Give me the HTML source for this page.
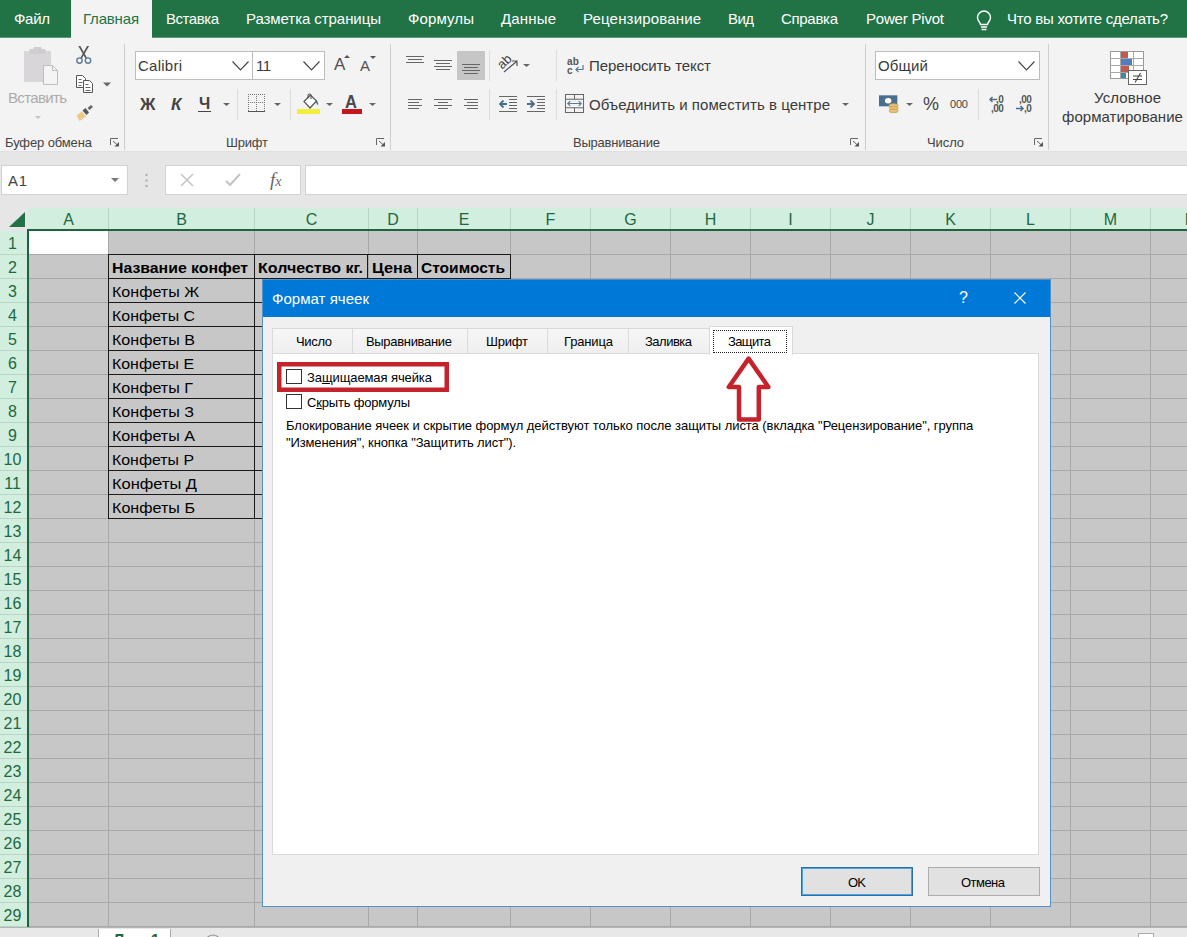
<!DOCTYPE html>
<html lang="ru"><head><meta charset="utf-8"><title>Формат ячеек</title>
<style>
*{box-sizing:border-box;margin:0;padding:0}
html,body{width:1187px;height:937px;overflow:hidden;background:#e6e6e6}
body{font-family:"Liberation Sans",sans-serif;position:relative;color:#262626}
.abs,.t{position:absolute;white-space:nowrap}
.t{line-height:1}
#tabs{position:absolute;left:0;top:0;width:1187px;height:38px;background:#217346;border-bottom:1px solid #5d9a7b}
#tabs .t{color:#fff;font-size:15px;top:11px}
#tabs .act{position:absolute;left:71px;top:0;width:81px;height:38px;background:#f3f3f3}
#ribbon{position:absolute;left:0;top:38px;width:1187px;height:114px;background:#f3f3f3;border-bottom:1px solid #e0e0e0}
.sep{position:absolute;width:1px;background:#dcdcdc}
.gl{position:absolute;font-size:13px;line-height:1;color:#444;white-space:nowrap;top:136px}
.rt{position:absolute;font-size:15px;line-height:1;color:#3a3a3a;white-space:nowrap}
.box{position:absolute;background:#fff;border:1px solid #bcbcbc}
svg{position:absolute;overflow:visible}
#grid{position:absolute;left:0;top:207px;width:1187px;height:721px;background:#c7c7c7;overflow:hidden}
.ch{position:absolute;top:0;height:23px;font-size:16px;color:#1e6840;text-align:center;line-height:25px}
.rh{position:absolute;left:0;width:25px;height:24px;font-size:16px;color:#1e6840;text-align:center;line-height:25px}
.vl{position:absolute;width:1px;background:#a8a8a8}
.hl{position:absolute;height:1px;background:#a8a8a8}
.c{position:absolute;font-size:15px;line-height:1;color:#000;white-space:nowrap;transform-origin:0 0}
.bk{position:absolute;background:#1a1a1a}
#dlg{position:absolute;left:262px;top:279px;width:789px;height:628px;background:#f0f0f0;border:1px solid #5590c8;}
#dlg .title{position:absolute;left:0;top:0;width:787px;height:37px;background:#0078d7}
.d{position:absolute;font-size:13px;line-height:1;color:#000;white-space:nowrap}
.tab{position:absolute;height:25px;border:1px solid #dadada;border-bottom:none;background:linear-gradient(#f6f6f6,#efefef)}
.cb{position:absolute;width:16px;height:15px;border:1px solid #333;background:#fff}
.btn{position:absolute;top:585px;height:31px;background:#e1e1e1}
</style></head><body>

<div id="tabs"><div class="act"></div>
<span class="t" style="letter-spacing:-0.30px;left:14px">Файл</span>
<span class="t" style="letter-spacing:-0.18px;left:83px;color:#217346">Главная</span>
<span class="t" style="letter-spacing:-0.46px;left:166px">Вставка</span>
<span class="t" style="letter-spacing:-0.07px;left:246px">Разметка страницы</span>
<span class="t" style="letter-spacing:0.12px;left:408px">Формулы</span>
<span class="t" style="letter-spacing:0.16px;left:501px">Данные</span>
<span class="t" style="letter-spacing:0.17px;left:583px">Рецензирование</span>
<span class="t" style="letter-spacing:-0.57px;left:728px">Вид</span>
<span class="t" style="letter-spacing:-0.31px;left:781px">Справка</span>
<span class="t" style="letter-spacing:-0.20px;left:866px">Power Pivot</span>
<span class="t" style="letter-spacing:-0.23px;left:1007px">Что вы хотите сделать?</span>
<svg style="left:974px;top:8px" width="20" height="24" viewBox="0 0 20 24" fill="none" stroke="#fff" stroke-width="1.4"><path d="M6.5 16.5c0-2-3-3.500-3-7a6.500 6.500 0 0 1 13 0c0 3.500-3 5-3 7z"/><path d="M7 19h6M7.500 21.500h5"/></svg>
</div>
<div id="ribbon"></div>
<div class="sep" style="left:124px;top:44px;height:106px;background:#cecece"></div>
<div class="sep" style="left:390px;top:44px;height:106px;background:#cecece"></div>
<div class="sep" style="left:865px;top:44px;height:106px;background:#cecece"></div>
<div class="sep" style="left:1048px;top:44px;height:106px;background:#cecece"></div>
<div class="sep" style="left:489px;top:50px;height:31px"></div>
<div class="sep" style="left:489px;top:89px;height:31px"></div>
<div class="sep" style="left:556px;top:50px;height:31px"></div>
<div class="sep" style="left:556px;top:89px;height:31px"></div>
<div class="sep" style="left:237px;top:89px;height:31px"></div>
<div class="sep" style="left:290px;top:89px;height:31px"></div>
<div class="sep" style="left:978px;top:89px;height:31px"></div>
<span class="gl" style="letter-spacing:-0.12px;left:5px">Буфер обмена</span>
<span class="gl" style="letter-spacing:-0.20px;left:226px">Шрифт</span>
<span class="gl" style="letter-spacing:-0.23px;left:573px">Выравнивание</span>
<span class="gl" style="letter-spacing:-0.10px;left:927px">Число</span>
<svg style="left:110px;top:138px" width="10" height="9" viewBox="0 0 10 9" fill="none" stroke="#666" stroke-width="1"><path d="M0.500 7V0.500H8"/><path d="M3 3l5 4.500"/><path d="M9 4v4.500H4.500z" fill="#555" stroke="none"/></svg>
<svg style="left:376px;top:138px" width="10" height="9" viewBox="0 0 10 9" fill="none" stroke="#666" stroke-width="1"><path d="M0.500 7V0.500H8"/><path d="M3 3l5 4.500"/><path d="M9 4v4.500H4.500z" fill="#555" stroke="none"/></svg>
<svg style="left:850px;top:138px" width="10" height="9" viewBox="0 0 10 9" fill="none" stroke="#666" stroke-width="1"><path d="M0.500 7V0.500H8"/><path d="M3 3l5 4.500"/><path d="M9 4v4.500H4.500z" fill="#555" stroke="none"/></svg>
<svg style="left:1034px;top:138px" width="10" height="9" viewBox="0 0 10 9" fill="none" stroke="#666" stroke-width="1"><path d="M0.500 7V0.500H8"/><path d="M3 3l5 4.500"/><path d="M9 4v4.500H4.500z" fill="#555" stroke="none"/></svg>
<svg style="left:24px;top:46px" width="36" height="40" viewBox="0 0 36 40"><rect x="0" y="5" width="27" height="31" fill="#d8d6d8"/><rect x="5.500" y="3" width="16" height="5" fill="#cfcdcf"/><rect x="9.500" y="1" width="8" height="4" rx="1" fill="#cfcdcf"/><path d="M19.500 19.500h9l5 5v14h-14z" fill="#f4f4f4" stroke="#bdbdbd"/><path d="M28.500 19.500v5h5" fill="none" stroke="#bdbdbd"/></svg>
<span class="rt" style="letter-spacing:-0.66px;left:8px;top:90px;color:#ababab">Вставить</span>
<svg style="left:35px;top:116px" width="6" height="3" viewBox="0 0 6 3"><path d="M0 0h6L3 3z" fill="#c4c4c4"/></svg>
<svg style="left:70px;top:40px" width="50" height="90" viewBox="70 40 50 90" fill="none"><path d="M78.300 46h2l6.800 12-1.400 0.800z" fill="#555"/><path d="M89.100 46h-2l-6.800 12 1.400 0.800z" fill="#555"/><circle cx="79.500" cy="60.600" r="2.700" stroke="#5a7a96" stroke-width="1.400"/><circle cx="88" cy="60.600" r="2.700" stroke="#5a7a96" stroke-width="1.400"/><path d="M76.500 75.500h6l3 3v9h-9z" fill="#fff" stroke="#555"/><path d="M78.500 79.500h3M78.500 82.500h4M78.500 85.500h3" stroke="#666"/><path d="M83.500 80.500h6l3 3v9h-9z" fill="#fff" stroke="#555"/><path d="M85.500 84.500h3M85.500 87.500h5M85.500 90.500h5" stroke="#666"/><path d="M103 82.500h8l-4 4z" fill="#666"/><path d="M76.500 115.500l5.500-4 4 5-6.500 4.500z" fill="#ecc889"/><path d="M82.500 110.500l3-2.500 3.500 4.500-2.500 2.500z" fill="#555"/><path d="M87.500 108l3.500-3 2 2-3.500 3z" fill="#666"/></svg>
<div class="box" style="left:135px;top:51px;width:118px;height:29px"></div>
<div class="box" style="left:252px;top:51px;width:73px;height:29px"></div>
<span class="rt" style="letter-spacing:0.25px;left:138px;top:58px">Calibri</span>
<span class="rt" style="letter-spacing:-0.58px;left:256px;top:58px">11</span>
<span class="rt" style="left:334px;top:56px;font-size:17px;color:#505050">A</span>
<svg style="left:344px;top:55px" width="6" height="3" viewBox="0 0 6 3"><path d="M0 3L3 0l3 3z" fill="#555"/></svg>
<span class="rt" style="left:360px;top:58px;font-size:15px;color:#505050">A</span>
<svg style="left:370px;top:56px" width="6" height="3" viewBox="0 0 6 3"><path d="M0 0L3 3l3-3z" fill="#555"/></svg>
<span class="rt" style="left:140px;top:96px;font-size:17px;font-weight:bold;color:#444">Ж</span>
<span class="rt" style="left:171px;top:96px;font-size:17px;font-weight:bold;font-style:italic;color:#444">К</span>
<span class="rt" style="left:199px;top:96px;font-size:16px;font-weight:bold;color:#444">Ч</span>
<div class="abs" style="left:198px;top:111px;width:13px;height:1px;background:#444"></div>
<svg style="left:223px;top:103px" width="7" height="3" viewBox="0 0 7 3"><path d="M0 0h7L3.500 3z" fill="#666"/></svg>
<svg style="left:274px;top:103px" width="7" height="3" viewBox="0 0 7 3"><path d="M0 0h7L3.500 3z" fill="#666"/></svg>
<svg style="left:326px;top:103px" width="7" height="3" viewBox="0 0 7 3"><path d="M0 0h7L3.500 3z" fill="#666"/></svg>
<svg style="left:369px;top:103px" width="7" height="3" viewBox="0 0 7 3"><path d="M0 0h7L3.500 3z" fill="#666"/></svg>
<svg style="left:842px;top:103px" width="7" height="3" viewBox="0 0 7 3"><path d="M0 0h7L3.500 3z" fill="#666"/></svg>
<svg style="left:906px;top:103px" width="7" height="3" viewBox="0 0 7 3"><path d="M0 0h7L3.500 3z" fill="#666"/></svg>
<svg style="left:248px;top:94px" width="17" height="18" viewBox="0 0 17 18" fill="none" stroke="#777" stroke-width="1"><path d="M0 0.500h17M0 8.500h17M0.500 0v17M8.500 0v17M16.500 0v17" stroke-dasharray="1 1"/><path d="M0 17.500h17" stroke="#555"/></svg>
<svg style="left:295px;top:90px" width="30" height="30" viewBox="295 90 30 30"><rect x="297" y="109" width="23" height="5" fill="#f3ee3a"/><path d="M304 101.500l6.500-6.500 6 6-6.500 7z" fill="#fff" stroke="#555" stroke-width="1.200"/><path d="M308 98.500V95.500a1.500 1.500 0 0 1 3 0V99" fill="none" stroke="#555" stroke-width="1.100"/><path d="M316 99.500c1.500 1.500 2.500 3.500 2 6l-2.500-3.500z" fill="#4a6f8e"/></svg>
<span class="rt" style="left:345px;top:93px;font-size:18px;font-weight:bold;color:#4a4a4a;transform:scaleX(0.92);transform-origin:0 0">A</span>
<div class="abs" style="left:342px;top:109px;width:20px;height:5px;background:#c4161c"></div>
<div class="abs" style="left:457px;top:51px;width:28px;height:29px;background:#c6c6c6"></div>
<svg style="left:406px;top:56px" width="18" height="20" viewBox="0 0 18 20" stroke="#666" stroke-width="1"><path d="M0 0.5h18"/><path d="M2 3.5h14"/><path d="M0 6.5h18"/></svg>
<svg style="left:434px;top:60px" width="18" height="20" viewBox="0 0 18 20" stroke="#666" stroke-width="1"><path d="M0 0.5h18"/><path d="M2 3.5h14"/><path d="M0 6.5h18"/><path d="M2 9.5h14"/></svg>
<svg style="left:462px;top:64px" width="18" height="20" viewBox="0 0 18 20" stroke="#666" stroke-width="1"><path d="M0 0.5h18"/><path d="M2 3.5h14"/><path d="M0 6.5h18"/><path d="M2 9.5h14"/></svg>
<svg style="left:408px;top:99px" width="14" height="20" viewBox="0 0 14 20" stroke="#666" stroke-width="1"><path d="M0 0.5h14"/><path d="M0 3.5h11"/><path d="M0 6.5h14"/><path d="M0 9.5h11"/></svg>
<svg style="left:434px;top:99px" width="18" height="20" viewBox="0 0 18 20" stroke="#666" stroke-width="1"><path d="M0 0.5h18"/><path d="M4 3.5h10"/><path d="M0 6.5h18"/><path d="M4 9.5h10"/></svg>
<svg style="left:464px;top:99px" width="14" height="20" viewBox="0 0 14 20" stroke="#666" stroke-width="1"><path d="M0 0.5h14"/><path d="M3 3.5h11"/><path d="M0 6.5h14"/><path d="M3 9.5h11"/></svg>
<span class="rt" style="left:497px;top:55px;font-size:13px;color:#444;transform:rotate(-45deg);transform-origin:50% 50%">ab</span>
<svg style="left:503px;top:60px" width="15" height="13" viewBox="0 0 15 13" fill="none" stroke="#555" stroke-width="1.200"><path d="M1 12L13.500 1.500M9 1h5v5"/></svg>
<svg style="left:523px;top:64px" width="7" height="3" viewBox="0 0 7 3"><path d="M0 0h7L3.500 3z" fill="#666"/></svg>
<svg style="left:499px;top:96px" width="18" height="16" viewBox="0 0 18 16" stroke="#666" stroke-width="1" fill="none"><path d="M0 0.500h18M10 3.500h8M10 6.500h8M10 9.500h8M10 12.500h8M0 15.500h18"/><path d="M8 8H1.500M4.500 4.500L1 8l3.500 3.500" stroke="#4a6f8e" stroke-width="1.800"/></svg>
<svg style="left:527px;top:96px" width="18" height="16" viewBox="0 0 18 16" stroke="#666" stroke-width="1" fill="none"><path d="M0 0.500h18M10 3.500h8M10 6.500h8M10 9.500h8M10 12.500h8M0 15.500h18"/><path d="M0 8h6.500M3.500 4.500L7 8l-3.500 3.500" stroke="#4a6f8e" stroke-width="1.800"/></svg>
<span class="rt" style="left:567px;top:57px;font-size:10px;font-weight:bold;color:#555;line-height:9px;letter-spacing:0.3px">ab<br>c</span>
<svg style="left:575px;top:65px" width="9" height="8" viewBox="0 0 9 8" fill="none" stroke="#5a7a96" stroke-width="1.200"><path d="M8 0v4.500H1M3.500 2L1 4.500 3.500 7"/></svg>
<span class="rt" style="letter-spacing:-0.09px;left:589px;top:58px">Переносить текст</span>
<svg style="left:565px;top:94px" width="19" height="19" viewBox="0 0 20 20" fill="none" stroke="#666" stroke-width="1.050"><rect x="0.500" y="0.500" width="19" height="19"/><path d="M0.500 5.500h19M0.500 14.500h19M10 0.500v5M10 14.500v5"/><path d="M3 10h14M5.500 7.500L3 10l2.500 2.500M14.500 7.500L17 10l-2.500 2.500" stroke="#5a7a96" stroke-width="1.300"/></svg>
<span class="rt" style="letter-spacing:0.04px;left:589px;top:97px">Объединить и поместить в центре</span>
<div class="box" style="left:875px;top:51px;width:165px;height:29px"></div>
<span class="rt" style="letter-spacing:0.16px;left:878px;top:58px">Общий</span>
<svg style="left:232px;top:61px" width="17" height="10" viewBox="0 0 17 10" fill="none" stroke="#444" stroke-width="1.100"><path d="M0.500 0.500l8 8.500 8-8.500"/></svg>
<svg style="left:303px;top:61px" width="17" height="10" viewBox="0 0 17 10" fill="none" stroke="#444" stroke-width="1.100"><path d="M0.500 0.500l8 8.500 8-8.500"/></svg>
<svg style="left:1018px;top:61px" width="17" height="10" viewBox="0 0 17 10" fill="none" stroke="#444" stroke-width="1.100"><path d="M0.500 0.500l8 8.500 8-8.500"/></svg>
<svg style="left:879px;top:95px" width="22" height="19" viewBox="0 0 24 20"><rect x="0" y="0" width="20" height="12" fill="#4a6f8e"/><ellipse cx="10" cy="6" rx="3.500" ry="3" fill="#fff"/><ellipse cx="16" cy="11" rx="5" ry="2" fill="#e8c178" stroke="#b8903c" stroke-width="0.600"/><ellipse cx="16" cy="14" rx="5" ry="2" fill="#e8c178" stroke="#b8903c" stroke-width="0.600"/><ellipse cx="16" cy="17" rx="5" ry="2" fill="#e8c178" stroke="#b8903c" stroke-width="0.600"/></svg>
<span class="rt" style="left:923px;top:95px;font-size:18px;color:#444">%</span>
<span class="rt" style="left:950px;top:99px;font-size:11px;color:#444;letter-spacing:-0.2px">000</span>
<span class="rt" style="left:996px;top:95px;font-size:10px;font-weight:bold;color:#555;line-height:9px;letter-spacing:-0.5px">,0</span>
<span class="rt" style="left:991px;top:104px;font-size:10px;font-weight:bold;color:#555;line-height:9px;letter-spacing:-0.5px">,00</span>
<svg style="left:989px;top:96px" width="8" height="7" viewBox="0 0 8 7" fill="none" stroke="#4a6f8e" stroke-width="1.500"><path d="M8 3.500H1M3.500 1L1 3.500 3.500 6"/></svg>
<span class="rt" style="left:1019px;top:95px;font-size:10px;font-weight:bold;color:#555;line-height:9px;letter-spacing:-0.5px">,00</span>
<span class="rt" style="left:1024px;top:104px;font-size:10px;font-weight:bold;color:#555;line-height:9px;letter-spacing:-0.5px">,0</span>
<svg style="left:1016px;top:105px" width="8" height="7" viewBox="0 0 8 7" fill="none" stroke="#4a6f8e" stroke-width="1.500"><path d="M0 3.500h7M4.500 1L7 3.500 4.500 6"/></svg>
<svg style="left:1105px;top:45px" width="50" height="45" viewBox="1105 45 50 45"><rect x="1110.500" y="51.500" width="33" height="27" fill="#fff" stroke="#9a9a9a"/><path d="M1110.500 58.500h33M1110.500 65.500h33M1110.500 72.500h33M1120.500 51.500v27M1133.500 51.500v27" stroke="#a8a8a8" fill="none"/><rect x="1121" y="52" width="7" height="6" fill="#c25a4e"/><rect x="1121" y="59" width="11" height="6" fill="#4f7fbf"/><rect x="1121" y="66" width="8" height="6" fill="#c25a4e"/><rect x="1121" y="73" width="5" height="5" fill="#3f8aa6"/><rect x="1128.500" y="70.500" width="18" height="14" fill="#fff" stroke="#666"/><path d="M1133 76h9M1133 79.500h9M1140.500 73l-5.500 9.500" stroke="#444" fill="none" stroke-width="1.100"/></svg>
<span class="rt" style="letter-spacing:0.11px;left:1094px;top:90px">Условное</span>
<span class="rt" style="letter-spacing:0.04px;left:1062px;top:109px">форматирование</span>
<div class="abs" style="left:1px;top:165px;width:127px;height:30px;background:#fff;border:1px solid #d2d2d2"></div>
<span class="rt" style="letter-spacing:0.64px;left:8px;top:173px;color:#444">A1</span>
<svg style="left:111px;top:178px" width="8" height="4" viewBox="0 0 8 4"><path d="M0 0h8L4 4z" fill="#777"/></svg>
<svg style="left:145px;top:173px" width="3" height="15" viewBox="0 0 3 15" fill="#b0b0b0"><circle cx="1.500" cy="2" r="1.200"/><circle cx="1.500" cy="7.500" r="1.200"/><circle cx="1.500" cy="13" r="1.200"/></svg>
<div class="abs" style="left:165px;top:165px;width:136px;height:30px;background:#fff;border:1px solid #d2d2d2"></div>
<svg style="left:180px;top:173px" width="14" height="14" viewBox="0 0 14 14" fill="none" stroke="#c4c4c4" stroke-width="1.500"><path d="M1 1l12 12M13 1L1 13"/></svg>
<svg style="left:225px;top:173px" width="16" height="14" viewBox="0 0 16 14" fill="none" stroke="#c4c4c4" stroke-width="2"><path d="M1 8l4 4L15 1"/></svg>
<span class="rt" style="left:270px;top:170px;font-family:'Liberation Serif',serif;font-style:italic;font-size:19px;color:#666">f<span style="font-size:14px">x</span></span>
<div class="abs" style="left:305px;top:165px;width:890px;height:30px;background:#fff;border:1px solid #d2d2d2"></div>
<div id="grid">
<div class="abs" style="left:0;top:1px;width:1187px;height:23px;background:#d1eedf"></div>
<div class="abs" style="left:0;top:0;width:1187px;height:1px;background:#e6e6e6"></div>
<div class="abs" style="left:0;top:0;width:28px;height:721px;background:#d1eedf"></div>
<div class="abs" style="left:0;top:0;width:28px;height:24px;background:#e6e6e6"></div>
<svg style="left:9px;top:5px" width="16" height="15" viewBox="0 0 16 15"><path d="M16 0v15H0z" fill="#217346"/></svg>
<div class="ch" style="left:29px;width:79px">A</div>
<div class="vl" style="left:108px;top:1px;height:23px;background:#b4d6c4"></div>
<div class="vl" style="left:108px;top:24px;height:697px"></div>
<div class="ch" style="left:109px;width:145px">B</div>
<div class="vl" style="left:254px;top:1px;height:23px;background:#b4d6c4"></div>
<div class="vl" style="left:254px;top:24px;height:697px"></div>
<div class="ch" style="left:255px;width:113px">C</div>
<div class="vl" style="left:368px;top:1px;height:23px;background:#b4d6c4"></div>
<div class="vl" style="left:368px;top:24px;height:697px"></div>
<div class="ch" style="left:369px;width:48px">D</div>
<div class="vl" style="left:417px;top:1px;height:23px;background:#b4d6c4"></div>
<div class="vl" style="left:417px;top:24px;height:697px"></div>
<div class="ch" style="left:418px;width:92px">E</div>
<div class="vl" style="left:510px;top:1px;height:23px;background:#b4d6c4"></div>
<div class="vl" style="left:510px;top:24px;height:697px"></div>
<div class="ch" style="left:511px;width:79px">F</div>
<div class="vl" style="left:590px;top:1px;height:23px;background:#b4d6c4"></div>
<div class="vl" style="left:590px;top:24px;height:697px"></div>
<div class="ch" style="left:591px;width:79px">G</div>
<div class="vl" style="left:670px;top:1px;height:23px;background:#b4d6c4"></div>
<div class="vl" style="left:670px;top:24px;height:697px"></div>
<div class="ch" style="left:671px;width:79px">H</div>
<div class="vl" style="left:750px;top:1px;height:23px;background:#b4d6c4"></div>
<div class="vl" style="left:750px;top:24px;height:697px"></div>
<div class="ch" style="left:751px;width:79px">I</div>
<div class="vl" style="left:830px;top:1px;height:23px;background:#b4d6c4"></div>
<div class="vl" style="left:830px;top:24px;height:697px"></div>
<div class="ch" style="left:831px;width:79px">J</div>
<div class="vl" style="left:910px;top:1px;height:23px;background:#b4d6c4"></div>
<div class="vl" style="left:910px;top:24px;height:697px"></div>
<div class="ch" style="left:911px;width:79px">K</div>
<div class="vl" style="left:990px;top:1px;height:23px;background:#b4d6c4"></div>
<div class="vl" style="left:990px;top:24px;height:697px"></div>
<div class="ch" style="left:991px;width:79px">L</div>
<div class="vl" style="left:1070px;top:1px;height:23px;background:#b4d6c4"></div>
<div class="vl" style="left:1070px;top:24px;height:697px"></div>
<div class="ch" style="left:1071px;width:79px">M</div>
<div class="vl" style="left:1150px;top:1px;height:23px;background:#b4d6c4"></div>
<div class="vl" style="left:1150px;top:24px;height:697px"></div>
<div class="ch" style="left:1151px;width:79px">N</div>
<div class="rh" style="top:24px">1</div>
<div class="hl" style="left:0;top:47px;width:27px;background:#b8d8c6"></div>
<div class="hl" style="left:28px;top:47px;width:1159px"></div>
<div class="rh" style="top:48px">2</div>
<div class="hl" style="left:0;top:71px;width:27px;background:#b8d8c6"></div>
<div class="hl" style="left:28px;top:71px;width:1159px"></div>
<div class="rh" style="top:72px">3</div>
<div class="hl" style="left:0;top:95px;width:27px;background:#b8d8c6"></div>
<div class="hl" style="left:28px;top:95px;width:1159px"></div>
<div class="rh" style="top:96px">4</div>
<div class="hl" style="left:0;top:119px;width:27px;background:#b8d8c6"></div>
<div class="hl" style="left:28px;top:119px;width:1159px"></div>
<div class="rh" style="top:120px">5</div>
<div class="hl" style="left:0;top:143px;width:27px;background:#b8d8c6"></div>
<div class="hl" style="left:28px;top:143px;width:1159px"></div>
<div class="rh" style="top:144px">6</div>
<div class="hl" style="left:0;top:167px;width:27px;background:#b8d8c6"></div>
<div class="hl" style="left:28px;top:167px;width:1159px"></div>
<div class="rh" style="top:168px">7</div>
<div class="hl" style="left:0;top:191px;width:27px;background:#b8d8c6"></div>
<div class="hl" style="left:28px;top:191px;width:1159px"></div>
<div class="rh" style="top:192px">8</div>
<div class="hl" style="left:0;top:215px;width:27px;background:#b8d8c6"></div>
<div class="hl" style="left:28px;top:215px;width:1159px"></div>
<div class="rh" style="top:216px">9</div>
<div class="hl" style="left:0;top:239px;width:27px;background:#b8d8c6"></div>
<div class="hl" style="left:28px;top:239px;width:1159px"></div>
<div class="rh" style="top:240px">10</div>
<div class="hl" style="left:0;top:263px;width:27px;background:#b8d8c6"></div>
<div class="hl" style="left:28px;top:263px;width:1159px"></div>
<div class="rh" style="top:264px">11</div>
<div class="hl" style="left:0;top:287px;width:27px;background:#b8d8c6"></div>
<div class="hl" style="left:28px;top:287px;width:1159px"></div>
<div class="rh" style="top:288px">12</div>
<div class="hl" style="left:0;top:311px;width:27px;background:#b8d8c6"></div>
<div class="hl" style="left:28px;top:311px;width:1159px"></div>
<div class="rh" style="top:312px">13</div>
<div class="hl" style="left:0;top:335px;width:27px;background:#b8d8c6"></div>
<div class="hl" style="left:28px;top:335px;width:1159px"></div>
<div class="rh" style="top:336px">14</div>
<div class="hl" style="left:0;top:359px;width:27px;background:#b8d8c6"></div>
<div class="hl" style="left:28px;top:359px;width:1159px"></div>
<div class="rh" style="top:360px">15</div>
<div class="hl" style="left:0;top:383px;width:27px;background:#b8d8c6"></div>
<div class="hl" style="left:28px;top:383px;width:1159px"></div>
<div class="rh" style="top:384px">16</div>
<div class="hl" style="left:0;top:407px;width:27px;background:#b8d8c6"></div>
<div class="hl" style="left:28px;top:407px;width:1159px"></div>
<div class="rh" style="top:408px">17</div>
<div class="hl" style="left:0;top:431px;width:27px;background:#b8d8c6"></div>
<div class="hl" style="left:28px;top:431px;width:1159px"></div>
<div class="rh" style="top:432px">18</div>
<div class="hl" style="left:0;top:455px;width:27px;background:#b8d8c6"></div>
<div class="hl" style="left:28px;top:455px;width:1159px"></div>
<div class="rh" style="top:456px">19</div>
<div class="hl" style="left:0;top:479px;width:27px;background:#b8d8c6"></div>
<div class="hl" style="left:28px;top:479px;width:1159px"></div>
<div class="rh" style="top:480px">20</div>
<div class="hl" style="left:0;top:503px;width:27px;background:#b8d8c6"></div>
<div class="hl" style="left:28px;top:503px;width:1159px"></div>
<div class="rh" style="top:504px">21</div>
<div class="hl" style="left:0;top:527px;width:27px;background:#b8d8c6"></div>
<div class="hl" style="left:28px;top:527px;width:1159px"></div>
<div class="rh" style="top:528px">22</div>
<div class="hl" style="left:0;top:551px;width:27px;background:#b8d8c6"></div>
<div class="hl" style="left:28px;top:551px;width:1159px"></div>
<div class="rh" style="top:552px">23</div>
<div class="hl" style="left:0;top:575px;width:27px;background:#b8d8c6"></div>
<div class="hl" style="left:28px;top:575px;width:1159px"></div>
<div class="rh" style="top:576px">24</div>
<div class="hl" style="left:0;top:599px;width:27px;background:#b8d8c6"></div>
<div class="hl" style="left:28px;top:599px;width:1159px"></div>
<div class="rh" style="top:600px">25</div>
<div class="hl" style="left:0;top:623px;width:27px;background:#b8d8c6"></div>
<div class="hl" style="left:28px;top:623px;width:1159px"></div>
<div class="rh" style="top:624px">26</div>
<div class="hl" style="left:0;top:647px;width:27px;background:#b8d8c6"></div>
<div class="hl" style="left:28px;top:647px;width:1159px"></div>
<div class="rh" style="top:648px">27</div>
<div class="hl" style="left:0;top:671px;width:27px;background:#b8d8c6"></div>
<div class="hl" style="left:28px;top:671px;width:1159px"></div>
<div class="rh" style="top:672px">28</div>
<div class="hl" style="left:0;top:695px;width:27px;background:#b8d8c6"></div>
<div class="hl" style="left:28px;top:695px;width:1159px"></div>
<div class="rh" style="top:696px">29</div>
<div class="hl" style="left:0;top:719px;width:27px;background:#b8d8c6"></div>
<div class="hl" style="left:28px;top:719px;width:1159px"></div>
<div class="rh" style="top:720px">30</div>
<div class="hl" style="left:0;top:743px;width:27px;background:#b8d8c6"></div>
<div class="hl" style="left:28px;top:743px;width:1159px"></div>
<div class="abs" style="left:27px;top:22px;width:1160px;height:2px;background:#22633f"></div>
<div class="abs" style="left:27px;top:22px;width:2px;height:699px;background:#22633f"></div>
<div class="abs" style="left:29px;top:24px;width:79px;height:23px;background:#fff"></div>
<div class="bk" style="left:108px;top:47px;width:403px;height:1px"></div>
<div class="bk" style="left:108px;top:71px;width:403px;height:1px"></div>
<div class="bk" style="left:108px;top:47px;width:1px;height:25px"></div>
<div class="bk" style="left:254px;top:47px;width:1px;height:25px"></div>
<div class="bk" style="left:367px;top:47px;width:1px;height:25px"></div>
<div class="bk" style="left:417px;top:47px;width:1px;height:25px"></div>
<div class="bk" style="left:510px;top:47px;width:1px;height:25px"></div>
<div class="bk" style="left:108px;top:95px;width:403px;height:1px"></div>
<div class="bk" style="left:108px;top:119px;width:403px;height:1px"></div>
<div class="bk" style="left:108px;top:143px;width:403px;height:1px"></div>
<div class="bk" style="left:108px;top:167px;width:403px;height:1px"></div>
<div class="bk" style="left:108px;top:191px;width:403px;height:1px"></div>
<div class="bk" style="left:108px;top:215px;width:403px;height:1px"></div>
<div class="bk" style="left:108px;top:239px;width:403px;height:1px"></div>
<div class="bk" style="left:108px;top:263px;width:403px;height:1px"></div>
<div class="bk" style="left:108px;top:287px;width:403px;height:1px"></div>
<div class="bk" style="left:108px;top:311px;width:403px;height:1px"></div>
<div class="bk" style="left:108px;top:71px;width:1px;height:241px"></div>
<div class="bk" style="left:254px;top:71px;width:1px;height:241px"></div>
<div class="bk" style="left:367px;top:71px;width:1px;height:241px"></div>
<div class="bk" style="left:417px;top:71px;width:1px;height:241px"></div>
<div class="bk" style="left:510px;top:71px;width:1px;height:241px"></div>
<span class="c" style="transform:scaleX(1.0549);left:112px;top:53px;font-weight:bold">Название конфет</span>
<span class="c" style="transform:scaleX(1.0668);left:258px;top:53px;font-weight:bold">Колчество кг.</span>
<span class="c" style="transform:scaleX(1.0843);left:372px;top:53px;font-weight:bold">Цена</span>
<span class="c" style="transform:scaleX(1.0352);left:421px;top:53px;font-weight:bold">Стоимость</span>
<span class="c" style="transform:scaleX(1.0712);left:112px;top:77px">Конфеты Ж</span>
<span class="c" style="transform:scaleX(1.0613);left:112px;top:101px">Конфеты С</span>
<span class="c" style="transform:scaleX(1.0727);left:112px;top:125px">Конфеты В</span>
<span class="c" style="transform:scaleX(1.0598);left:112px;top:149px">Конфеты Е</span>
<span class="c" style="transform:scaleX(1.0728);left:112px;top:173px">Конфеты Г</span>
<span class="c" style="transform:scaleX(1.0728);left:112px;top:197px">Конфеты З</span>
<span class="c" style="transform:scaleX(1.0727);left:112px;top:221px">Конфеты А</span>
<span class="c" style="transform:scaleX(1.0598);left:112px;top:245px">Конфеты Р</span>
<span class="c" style="transform:scaleX(1.0963);left:112px;top:269px">Конфеты Д</span>
<span class="c" style="transform:scaleX(1.0749);left:112px;top:293px">Конфеты Б</span>
</div>
<div class="abs" style="left:0;top:927px;width:1187px;height:10px;background:#e8e8e8;border-top:1px solid #b4b4b4"></div>
<div class="abs" style="left:98px;top:929px;width:73px;height:8px;background:#fff;border-left:1px solid #ababab;border-right:1px solid #ababab;overflow:hidden"><span class="t" style="left:14px;top:4px;font-size:16px;font-weight:bold;color:#1e6840">Лист1</span></div>
<svg style="left:204px;top:934px" width="18" height="18" viewBox="0 0 18 18" fill="none" stroke="#8a8a8a" stroke-width="1.200"><circle cx="9" cy="9" r="8"/></svg>
<div class="abs" style="left:1138px;top:933px;width:16px;height:4px;background:#fff;border:1px solid #ababab;border-bottom:none"></div>
<div id="dlg"><div class="title"></div>
<span class="d" style="letter-spacing:0.03px;left:9px;top:11px;color:#fff;font-size:15px">Формат ячеек</span>
<span class="d" style="left:696px;top:10px;color:#fff;font-size:16px">?</span>
<svg style="left:751px;top:12px" width="12" height="12" viewBox="0 0 12 12" fill="none" stroke="#fff" stroke-width="1.200"><path d="M0.500 0.500l11 11M11.500 0.500l-11 11"/></svg>
<div class="abs" style="left:9px;top:73px;width:767px;height:502px;background:#fff;border:1px solid #dadada"></div>
<div class="tab" style="left:9px;top:48px;width:81px"></div>
<span class="d" style="letter-spacing:-0.35px;left:33px;top:55px">Число</span>
<div class="tab" style="left:89px;top:48px;width:116px"></div>
<span class="d" style="letter-spacing:-0.32px;left:103px;top:55px">Выравнивание</span>
<div class="tab" style="left:204px;top:48px;width:81px"></div>
<span class="d" style="letter-spacing:-0.20px;left:223px;top:55px">Шрифт</span>
<div class="tab" style="left:284px;top:48px;width:82px"></div>
<span class="d" style="letter-spacing:-0.15px;left:301px;top:55px">Граница</span>
<div class="tab" style="left:365px;top:48px;width:82px"></div>
<span class="d" style="letter-spacing:-0.51px;left:382px;top:55px">Заливка</span>
<div class="abs" style="left:446px;top:46px;width:84px;height:29px;background:#fff;border:1px solid #dadada;border-bottom:none"></div>
<div class="abs" style="left:450px;top:50px;width:74px;height:23px;border:1px dotted #222"></div>
<span class="d" style="letter-spacing:-0.62px;left:465px;top:55px">Защита</span>
<div class="cb" style="left:23px;top:89px"></div>
<span class="d" style="letter-spacing:-0.10px;left:44px;top:91px">За<u>щ</u>ищаемая ячейка</span>
<div class="cb" style="left:23px;top:114px"></div>
<span class="d" style="letter-spacing:-0.18px;left:44px;top:116px">С<u>к</u>рыть формулы</span>
<span class="d" style="letter-spacing:-0.06px;left:23px;top:139px">Блокирование ячеек и скрытие формул действуют только после защиты листа (вкладка "Рецензирование", группа</span>
<span class="d" style="letter-spacing:-0.13px;left:23px;top:156px">"Изменения", кнопка "Защитить лист").</span>
<svg style="left:14px;top:82px" width="172" height="30" viewBox="0 0 172 30" fill="none" stroke="#c5232c" stroke-width="4.500"><rect x="2.250" y="2.250" width="167.500" height="25.500"/></svg>
<svg style="left:457px;top:70px" width="60" height="80" viewBox="720 350 60 80" fill="none" stroke="#c5232c" stroke-width="4.500" stroke-linejoin="round"><path d="M748.600 358.600L728.800 387H739V419.500H758.800V387H768.400Z"/></svg>
<div class="abs" style="left:538px;top:587px;width:112px;height:29px;background:#e1e1e1;border:1px solid #2c6fa3;box-shadow:inset 0 0 0 1px #4aa3e6"></div>
<span class="d" style="letter-spacing:-0.80px;left:585px;top:596px">OK</span>
<div class="abs" style="left:665px;top:587px;width:112px;height:29px;background:#e1e1e1;border:1px solid #adadad"></div>
<span class="d" style="letter-spacing:-0.53px;left:698px;top:596px">Отмена</span>
</div>
</body></html>
